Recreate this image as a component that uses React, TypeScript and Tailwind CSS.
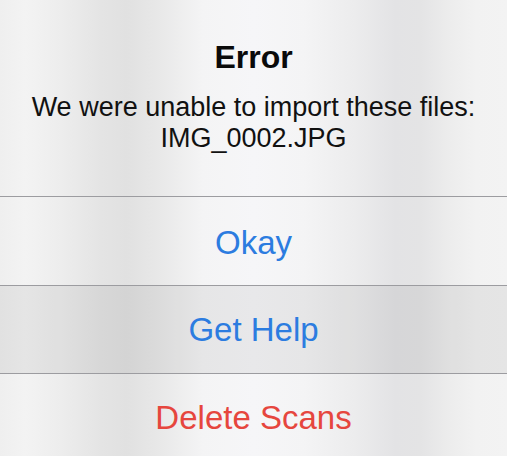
import React from "react";

export default function App() {
  return (
    <div
      className="w-[507px] h-[456px] overflow-hidden flex flex-col bg-[linear-gradient(90deg,#efefef_0%,#f3f3f3_5%,#ededed_12%,#e4e4e4_20%,#e1e1e1_25%,#e9e9e9_32%,#f4f4f5_40%,#f6f6f8_50%,#f4f4f5_60%,#ececed_70%,#e3e3e5_78%,#e4e4e5_83%,#ededed_89%,#f2f2f2_94%,#f3f3f3_100%)]"
      style={{ fontFamily: '"Liberation Sans", Arial, sans-serif' }}
    >
      <div className="h-[196px] shrink-0 flex flex-col items-center pt-[37px]">
        <div className="text-[32px] leading-[40px] font-bold text-[#0a0a0a]">Error</div>
        <div className="mt-[15px] text-[27px] leading-[31px] text-[#111111] text-center">
          <div>We were unable to import these files:</div>
          <div>IMG_0002.JPG</div>
        </div>
      </div>
      <div className="h-px shrink-0 bg-[#9c9ca0]" />
      <div className="h-[88px] shrink-0 flex items-center justify-center pt-[3px] text-[33px] text-[#2c7ce0]">
        Okay
      </div>
      <div className="h-px shrink-0 bg-[#9c9ca0]" />
      <div className="h-[87px] shrink-0 flex items-center justify-center text-[33px] text-[#2c7ce0] bg-[rgba(0,0,0,0.055)]">
        Get Help
      </div>
      <div className="h-px shrink-0 bg-[#9c9ca0]" />
      <div className="h-[88px] shrink-0 flex items-center justify-center text-[33px] text-[#e6463e]">
        Delete Scans
      </div>
    </div>
  );
}
